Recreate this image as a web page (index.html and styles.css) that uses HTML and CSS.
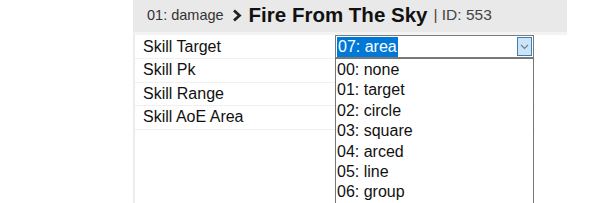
FILE: index.html
```html
<!DOCTYPE html>
<html lang="en">

<head>
    <meta charset="UTF-8">
    <meta name="viewport" content="width=device-width, initial-scale=1.0">
    <title>Skill editor</title>
    <link rel="stylesheet" href="styles.css">
</head>

<body>
    <div class="panel">
        <div class="head">
            <span class="crumb">01: damage</span>
            <svg class="arrow" width="10" height="13" viewBox="0 0 10 13"><path d="M2 1.5 L7.5 6.5 L2 11.5" fill="none" stroke="#222" stroke-width="2.8"/></svg>
            <span class="name">Fire From The Sky</span>
            <span class="sid">| ID: 553</span>
        </div>
        <div class="body">
            <table class="props">
                <tr>
                    <td class="label">Skill Target</td>
                    <td class="value">
                        <div class="select">
                            <span class="picked">07: area</span>
                            <span class="drop">
                                <svg width="9" height="6" viewBox="0 0 9 6"><path d="M1 1 L4.5 4.5 L8 1" fill="none" stroke="#6d7f8f" stroke-width="1.2"/></svg>
                            </span>
                            <ul class="list">
                                <li>00: none</li>
                                <li>01: target</li>
                                <li>02: circle</li>
                                <li>03: square</li>
                                <li>04: arced</li>
                                <li>05: line</li>
                                <li>06: group</li>
                            </ul>
                        </div>
                    </td>
                </tr>
                <tr>
                    <td class="label">Skill Pk</td>
                    <td class="value"></td>
                </tr>
                <tr>
                    <td class="label">Skill Range</td>
                    <td class="value"></td>
                </tr>
                <tr>
                    <td class="label">Skill AoE Area</td>
                    <td class="value"></td>
                </tr>
            </table>
        </div>
    </div>
</body>

</html>
```

FILE: styles.css
```css
* {
    padding: 0;
    margin: 0;
    box-sizing: border-box;
}

body {
    font-family: "Liberation Sans", Arial, sans-serif;
    color: #111;
    background: #fff;
}

.panel {
    margin-left: 133px;
    width: 434px;
}

.head {
    height: 32px;
    background: #e9e9e9;
    display: flex;
    align-items: center;
    padding-left: 14px;
    padding-bottom: 2px;
}

.crumb {
    font-size: 14.5px;
    color: #333;
}

.arrow {
    margin-left: 8px;
}

.name {
    font-size: 20.5px;
    font-weight: bold;
    color: #111;
    margin-left: 7px;
}

.sid {
    font-size: 15.5px;
    color: #444;
    margin-left: 6px;
}

.body {
    border-top: 3px solid #f3f3f3;
    border-left: 2px solid #ececec;
    height: 171px;
}

.props {
    border-collapse: collapse;
    width: 400px;
}

.props td {
    height: 23.5px;
    border-bottom: 1px solid #f0f0f0;
    font-size: 16px;
    padding: 0;
}

.label {
    width: 200px;
    padding-left: 8px !important;
}

.value {
    position: relative;
}

.select {
    position: relative;
    width: 199px;
    height: 23px;
    border: 1px solid #7a7a7a;
    background: #fff;
    display: flex;
    align-items: center;
    padding-left: 1px;
}

.picked {
    background: #0078d7;
    color: #fff;
    padding: 1px 1px 2px 1px;
    line-height: 17px;
}

.drop {
    position: absolute;
    right: 1px;
    top: 1px;
    width: 15px;
    height: 19px;
    background: #cce4f7;
    border: 1px solid #3c7fb1;
    display: flex;
    align-items: center;
    justify-content: center;
}

.list {
    list-style: none;
    position: absolute;
    left: -1px;
    top: 22px;
    width: 199px;
    height: 150px;
    border: 1px solid #767676;
    border-bottom: none;
    background: #fff;
    padding-top: 1px;
}

.list li {
    height: 20.4px;
    line-height: 20px;
    padding-left: 1px;
    font-size: 16px;
}
```
